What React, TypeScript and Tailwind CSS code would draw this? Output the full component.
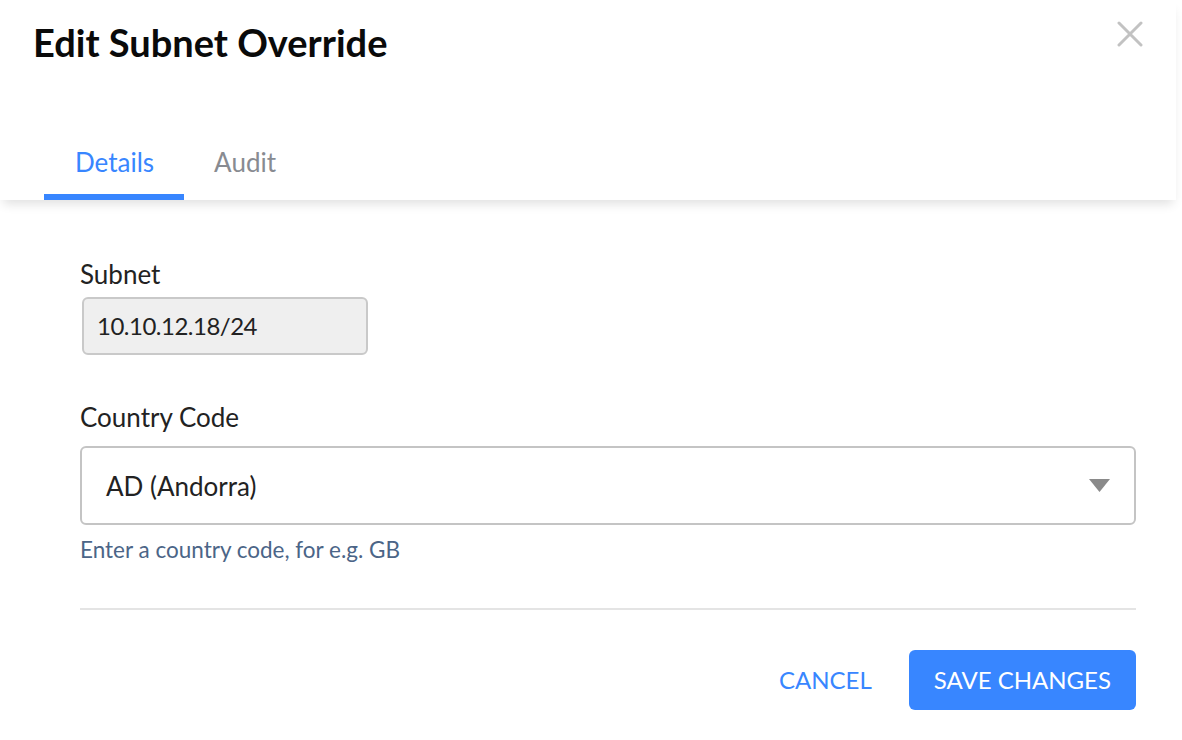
const tabs = [
  { id: "details", label: "Details" },
  { id: "audit", label: "Audit" },
];

function Caret() {
  return (
    <svg width="21" height="13" viewBox="0 0 21 13" className="shrink-0">
      <path d="M0 0 H21 L10.5 13 Z" fill="#8a8a8a" />
    </svg>
  );
}

function CloseIcon() {
  return (
    <svg width="26" height="26" viewBox="0 0 26 26">
      <path d="M2 2 L24 24 M24 2 L2 24" stroke="#c2c2c2" strokeWidth="3" strokeLinecap="round" fill="none" />
    </svg>
  );
}

export default function App() {
  const active = "details";

  return (
    <div className="w-[1182px] h-[740px] bg-white overflow-hidden font-['Lato',sans-serif]">
      <header className="relative z-10 h-[200px] mr-[6px] flex flex-col bg-white shadow-[0_7px_10px_-3px_rgba(0,0,0,0.12)]">
        <div className="flex items-start justify-between pl-[33px] pr-[33px]">
          <h1 className="pt-[19px] text-[38px] leading-[46px] font-bold text-[#0a0a0a]">Edit Subnet Override</h1>
          <button className="mt-[21px]">
            <CloseIcon />
          </button>
        </div>
        <nav className="mt-auto flex pl-[44px]">
          {tabs.map((t) => (
            <div
              key={t.id}
              className={
                t.id === active
                  ? "pl-[31px] pr-[30px] pb-[16px] text-[26px] leading-[32px] border-b-[6px] border-[#3886ff] text-[#3886ff]"
                  : "pl-[30px] pr-[30px] pb-[16px] text-[26px] leading-[32px] border-b-[6px] border-transparent text-[#888b91]"
              }
            >
              {t.label}
            </div>
          ))}
        </nav>
      </header>

      <main className="pl-[80px] pr-[46px] pt-[58px]">
        <label className="block text-[26px] leading-[32px] text-[#222]">Subnet</label>
        <div className="mt-[7px] ml-[2px] w-[286px] h-[58px] flex items-center pl-[13px] rounded-[6px] border-2 border-[#c9c9c9] bg-[#efefef] text-[24px] leading-[32px] tracking-[-0.5px] text-[#222]">
          10.10.12.18/24
        </div>

        <label className="block mt-[46px] text-[26px] leading-[32px] text-[#222]">Country Code</label>
        <div className="mt-[13px] h-[79px] flex items-center justify-between pl-[24px] pr-[24px] rounded-[6px] border-2 border-[#c4c4c4] text-[26px] leading-[34px] text-[#222]">
          <span>AD (Andorra)</span>
          <Caret />
        </div>
        <p className="mt-[12px] text-[22.5px] leading-[26px] text-[#4b6587]">Enter a country code, for e.g. GB</p>

        <div className="mt-[45px] h-[2px] bg-[#e4e4e4]" />

        <div className="mt-[40px] flex items-center justify-end gap-[37px]">
          <button className="text-[24px] leading-[30px] text-[#3886ff]">CANCEL</button>
          <button className="h-[60px] px-[25px] rounded-[6px] bg-[#3886ff] text-[24px] leading-[30px] text-white">SAVE CHANGES</button>
        </div>
      </main>
    </div>
  );
}
